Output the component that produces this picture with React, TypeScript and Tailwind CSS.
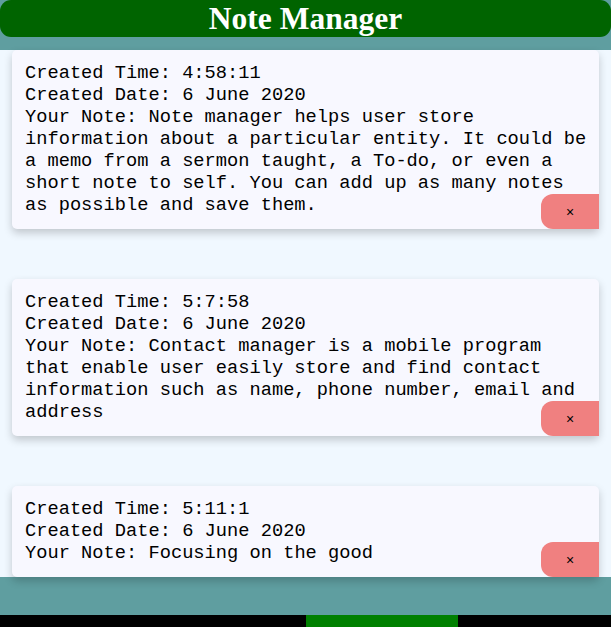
const notes = [
  {
    time: "4:58:11",
    date: "6 June 2020",
    text: "Note manager helps user store information about a particular entity. It could be a memo from a sermon taught, a To-do, or even a short note to self. You can add up as many notes as possible and save them.",
  },
  {
    time: "5:7:58",
    date: "6 June 2020",
    text: "Contact manager is a mobile program that enable user easily store and find contact information such as name, phone number, email and address",
  },
  {
    time: "5:11:1",
    date: "6 June 2020",
    text: "Focusing on the good",
  },
];

const App = () => {
  return (
    <div className="min-h-screen bg-[#f0f8ff]">
      {/* Header */}
      <div className="bg-[#5f9ea0] pb-[13px]">
        <h1 className="m-0 rounded-[11px] bg-[#006400] text-center text-[31.5px] font-bold leading-[37px] text-white [font-family:'Liberation_Serif',serif]">
          Note Manager
        </h1>
      </div>

      {/* Notes */}
      <div className="flex flex-col gap-[50px]">
        {notes.map((n, i) => (
          <div
            key={i}
            className="relative mx-[12px] rounded-[5px] bg-[#f8f8ff] pr-[11px] pl-[13px] pt-[12px] pb-[13px] text-[18.72px] leading-[22px] text-black shadow-[0_4px_8px_0_rgba(0,0,0,0.2)] [font-family:'Courier_New','Nimbus_Mono_PS','Nimbus_Mono_L','FreeMono','Liberation_Mono',monospace]"
          >
            <div>Created Time: {n.time}</div>
            <div>Created Date: {n.date}</div>
            <div>Your Note: {n.text}</div>
            <button className="absolute right-0 bottom-0 flex h-[35px] w-[58px] items-center justify-center rounded-l-[12px] bg-[#f08080] text-[14px] text-black [font-family:'Liberation_Sans',sans-serif]">
              ×
            </button>
          </div>
        ))}
      </div>

      {/* Footer */}
      <footer className="h-[38px] bg-[#5f9ea0]" />
      <div className="flex h-[40px] bg-black">
        <div className="w-[306px]" />
        <div className="w-[152px] bg-[#008000]" />
      </div>
    </div>
  );
};

export default App;
